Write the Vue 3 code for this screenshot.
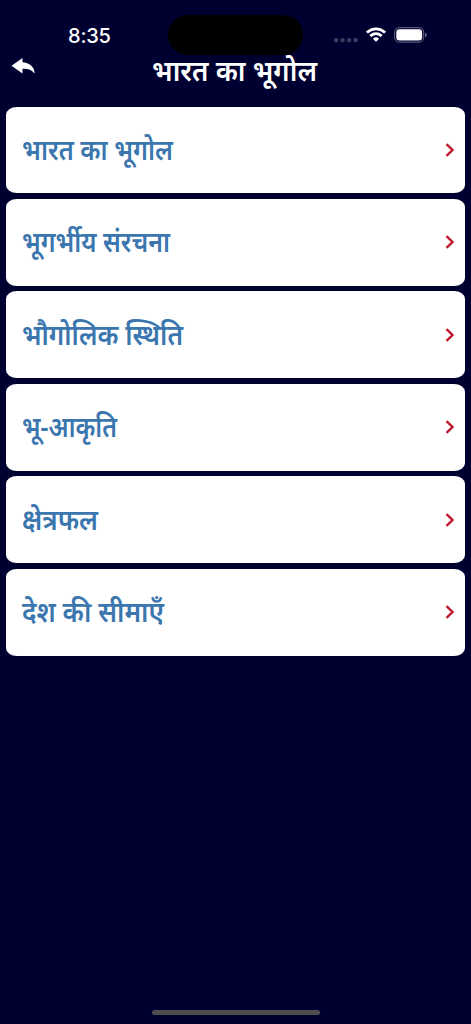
<template>
  <div class="screen">
    <div class="status-bar">
      <span class="time">8:35</span>
      <div class="island" />
      <div class="indicators">
        <svg class="dots" viewBox="0 0 24 6"><rect v-for="n in 4" :key="n" :x="(n - 1) * 6.5" y="1" width="4.2" height="4.2" rx="1.5" fill="#3d3a60" /></svg>
        <svg class="wifi" viewBox="0 0 20 15" fill="#fff">
          <path d="M.3 4.300a14 14 0 0 1 19.400 0 .5.5 0 0 1 0 .7L18.400 6.300a.5.5 0 0 1-.7 0 11.100 11.100 0 0 0-15.400 0 .5.5 0 0 1-.7 0L.3 5a.5.5 0 0 1 0-.7z" />
          <path d="M3.700 7.800a9.200 9.200 0 0 1 12.600 0 .5.5 0 0 1 0 .7L15 9.800a.5.5 0 0 1-.7 0 6.300 6.300 0 0 0-8.600 0 .5.5 0 0 1-.7 0L3.700 8.500a.5.5 0 0 1 0-.7z" />
          <path d="M7.200 11.400a4.300 4.300 0 0 1 5.600 0 .5.5 0 0 1 0 .7l-2.400 2.400a.5.5 0 0 1-.8 0L7.200 12.100a.5.5 0 0 1 0-.7z" />
        </svg>
        <svg class="battery" viewBox="0 0 34 16">
          <rect x="0.7" y="0.7" width="29" height="14.400" rx="4.500" fill="none" stroke="#6c6b8a" />
          <rect x="2.300" y="2.300" width="25.800" height="11.200" rx="3.200" fill="#fff" />
          <path d="M31.200 5.400c2 .7 2 4.300 0 5z" fill="#777790" />
        </svg>
      </div>
    </div>
    <header class="header">
      <svg class="back" viewBox="0 0 24 18"><path d="M.5 7.800 11.500 0v4.300C18 4.600 23 8.500 23.600 14.500c0 .8-.6.8-1 .1-2-2.900-5.600-4.100-11.100-3.800v4.700z" fill="#fff" /></svg>
      <svg class="title" role="heading">
        <text x="0" y="26" textLength="165" lengthAdjust="spacingAndGlyphs">{{ title }}</text>
      </svg>
    </header>
    <main class="list">
      <div v-for="topic in topics" :key="topic.name" class="card">
        <svg class="label">
          <text x="0" y="34" :textLength="topic.width" lengthAdjust="spacingAndGlyphs">{{ topic.name }}</text>
        </svg>
        <svg class="chevron" viewBox="0 0 10 14"><path d="M1.500 1.200 7.500 7l-6 5.800" fill="none" stroke="#bd1a2d" stroke-width="2.400" /></svg>
      </div>
    </main>
    <div class="home-bar" />
  </div>
</template>

<script setup>
const title = 'भारत का भूगोल'
const topics = [
  { name: 'भारत का भूगोल', width: 151 },
  { name: 'भूगर्भीय संरचना', width: 148 },
  { name: 'भौगोलिक स्थिति', width: 161 },
  { name: 'भू-आकृति', width: 95 },
  { name: 'क्षेत्रफल', width: 76 },
  { name: 'देश की सीमाएँ', width: 142 },
]
</script>

<style>
body { background: #000030; }
</style>

<style scoped>
.screen { display: flex; flex-direction: column; height: 1024px; background: #000030; font-family: "Noto Sans", "Noto Sans Devanagari", sans-serif; overflow: hidden; }
.status-bar { display: grid; grid-template-columns: 168px 135px 1fr; height: 55px; padding-top: 15px; box-sizing: border-box; }
.time { padding: 9px 0 0 68px; font: 500 20px/24px Inter, sans-serif; letter-spacing: -0.2px; color: #fff; }
.island { height: 40px; border-radius: 20px; background: #000; }
.indicators { display: flex; align-items: flex-start; padding: 12px 0 0 31px; }
.dots { width: 24px; height: 6px; margin-top: 10px; }
.wifi { width: 20px; height: 15px; margin-left: 8px; }
.battery { width: 34px; height: 16px; margin-left: 8px; }
.header { display: flex; justify-content: space-between; height: 51.500px; flex-shrink: 0; }
.back { width: 24px; height: 18px; margin: 3px 0 0 11px; }
.title { width: 165px; height: 40px; margin-right: 154px; overflow: visible; font-size: 29.500px; font-weight: 600; fill: #fff; }
.list { display: flex; flex-direction: column; gap: 5.800px; padding: 0 6px; }
.card { display: flex; align-items: center; justify-content: space-between; height: 86.700px; padding: 0 10px 0 16px; box-sizing: border-box; border-radius: 11px / 8px; background: #fff; }
.label { width: 180px; height: 48px; overflow: visible; font-size: 28px; font-weight: 600; fill: #3b76ae; }
.chevron { width: 10px; height: 14px; }
.home-bar { width: 168px; height: 5px; margin: auto auto 9px; border-radius: 3px; background: #4d4d4d; }
</style>
